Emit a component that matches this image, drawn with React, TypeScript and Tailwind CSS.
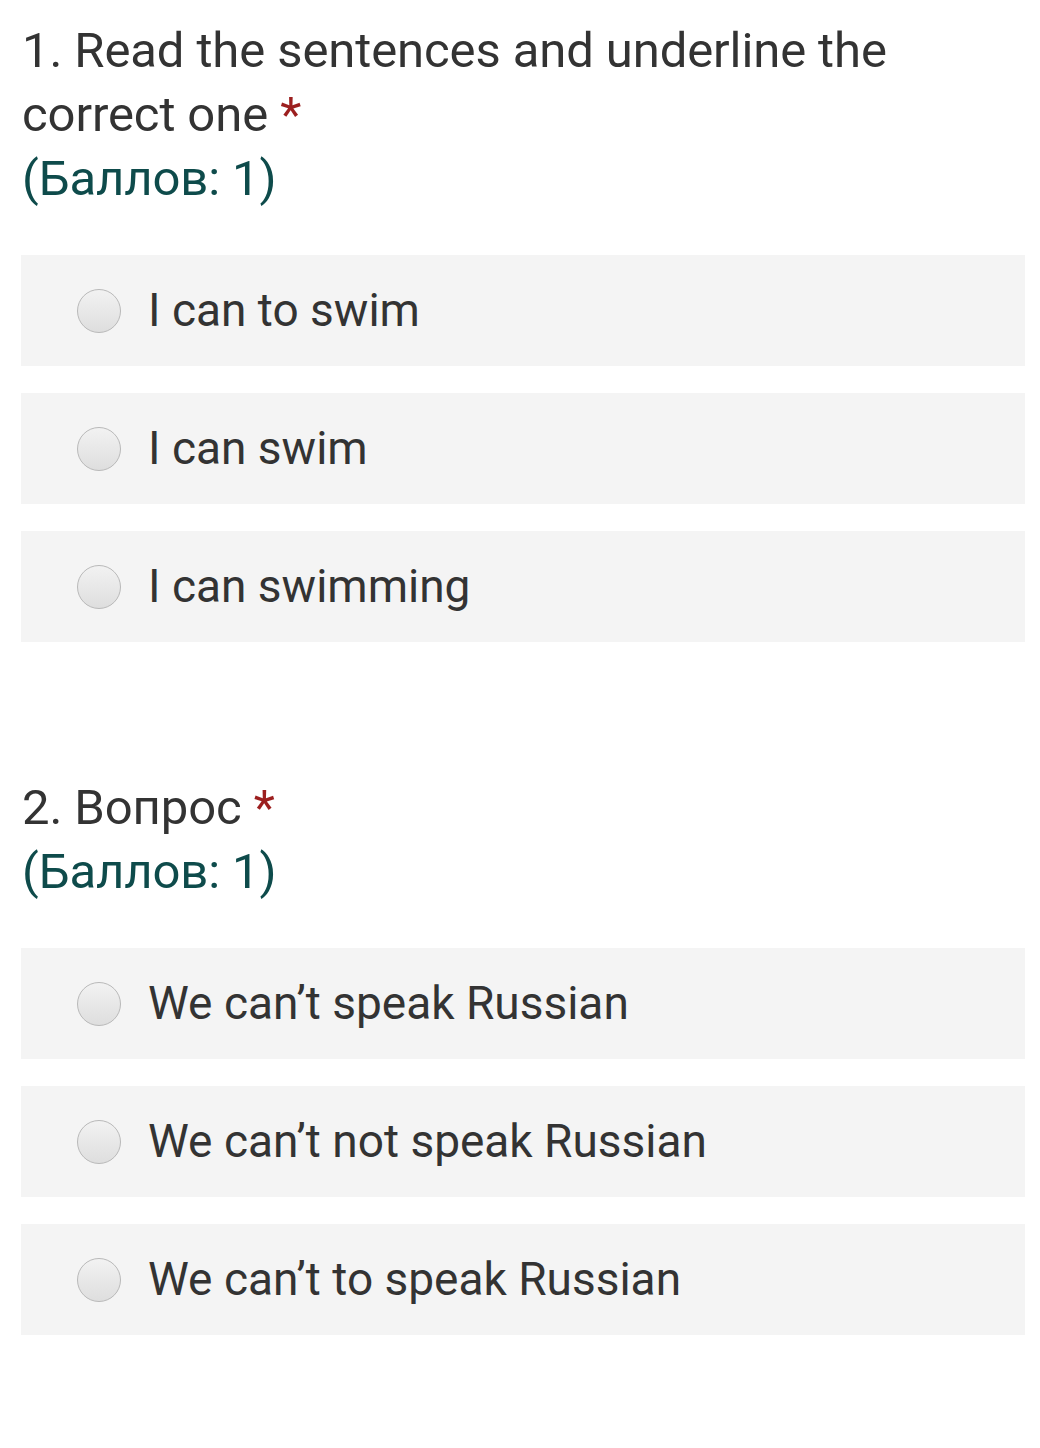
const questions = [
  {
    title: "1. Read the sentences and underline the correct one",
    options: ["I can to swim", "I can swim", "I can swimming"],
  },
  {
    title: "2. Вопрос",
    options: [
      "We can’t speak Russian",
      "We can’t not speak Russian",
      "We can’t to speak Russian",
    ],
  },
];

function Radio() {
  return (
    <span className="h-[44px] w-[44px] shrink-0 rounded-full border border-[#b9b9b9] bg-gradient-to-b from-[#f2f2f2] to-[#dedede]" />
  );
}

export default function App() {
  return (
    <main
      className="min-h-screen w-[1040px] bg-white px-[21px] pt-[19px] text-[#333333]"
      style={{ fontFamily: "Roboto, 'Noto Sans', sans-serif" }}
    >
      {questions.map((q, i) => (
        <section key={i} className={i === 0 ? "" : "mt-[134px]"}>
          <div className="pl-px text-[49px] leading-[64px] tracking-[-0.1px]">
            <div>
              {q.title} <span className="text-[#9c1f1f]">*</span>
            </div>
            <div className="text-[#0e4b4b]">(Баллов: 1)</div>
          </div>
          <div className="mt-[44px] flex w-[1004px] flex-col gap-[27px]">
            {q.options.map((o) => (
              <label
                key={o}
                className="flex h-[111px] items-center gap-[27px] bg-[#f4f4f4] pl-[56px] text-[46px]"
              >
                <Radio />
                <span>{o}</span>
              </label>
            ))}
          </div>
        </section>
      ))}
    </main>
  );
}
